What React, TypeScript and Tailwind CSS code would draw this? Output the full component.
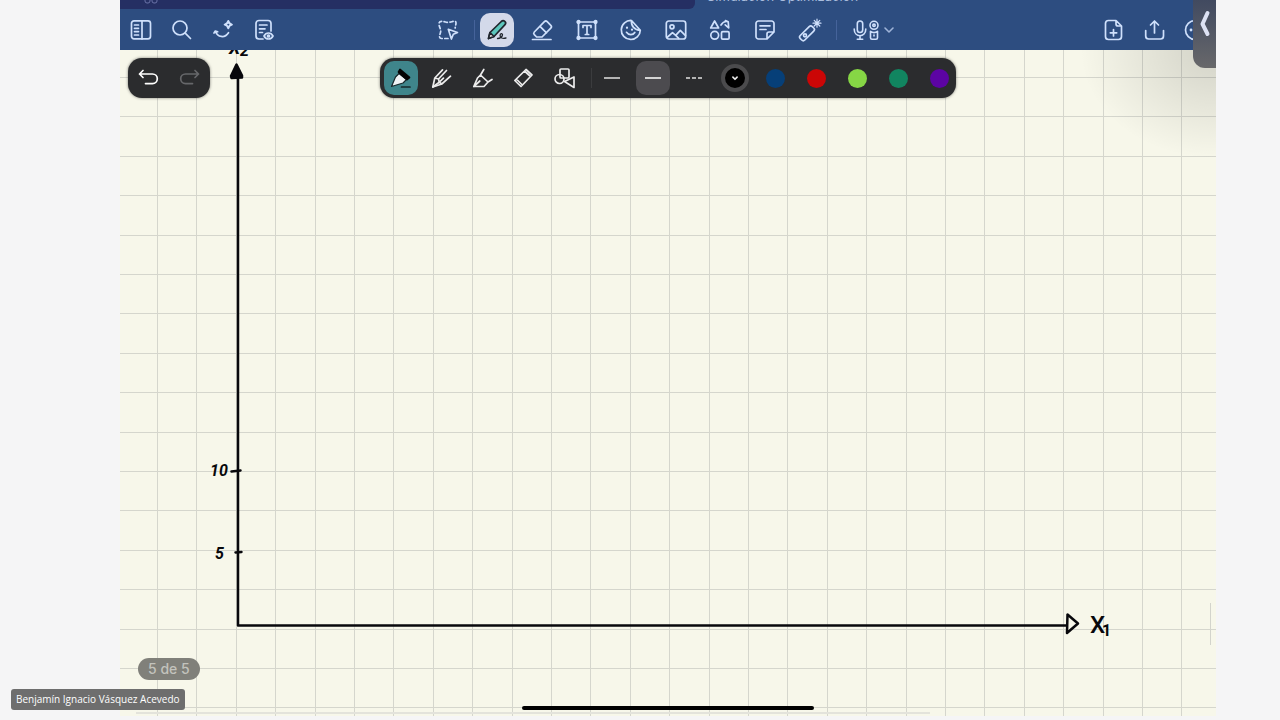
import type { ReactNode } from "react";

const GRID_STEP = 39.4;

const COLORS = [
  { name: "Azul", className: "bg-[#063f78]" },
  { name: "Rojo", className: "bg-[#cb0606]" },
  { name: "Lima", className: "bg-[#86d645]" },
  { name: "Verde", className: "bg-[#118560]" },
  { name: "Morado", className: "bg-[#5c04a3]" },
];

function Icon({ children, className = "size-6" }: { children: ReactNode; className?: string }) {
  return (
    <svg
      viewBox="0 0 24 24"
      className={`${className} shrink-0`}
      fill="none"
      stroke="currentColor"
      strokeWidth="1.7"
      strokeLinecap="round"
      strokeLinejoin="round"
      aria-hidden="true"
    >
      {children}
    </svg>
  );
}

function BarButton({ label, children }: { label: string; children: ReactNode }) {
  return (
    <button type="button" aria-label={label} className="flex h-10 w-[41px] items-center justify-center">
      {children}
    </button>
  );
}

function ToolButton({ label, active, children }: { label: string; active?: boolean; children: ReactNode }) {
  return (
    <button type="button" aria-label={label} aria-pressed={!!active} className="flex h-10 items-center justify-center">
      <span
        className={`flex h-[34px] w-[34px] items-center justify-center rounded-[10px] ${active ? "bg-[#d3d9ea]" : ""}`}
      >
        {children}
      </span>
    </button>
  );
}

function TabStrip() {
  return (
    <div className="flex h-[9px] items-end overflow-hidden bg-[#2d4d80] text-[13px] leading-4">
      <div className="flex h-full w-[575px] items-end overflow-hidden rounded-br-md bg-[#252f63] pb-[5px] pl-6 text-[#6a73a8]">
        <svg viewBox="0 0 14 14" className="size-3.5 shrink-0" fill="none" stroke="currentColor" aria-hidden="true">
          <rect x="1" y="1" width="5" height="12" rx="2" />
          <rect x="8" y="1" width="5" height="12" rx="2" />
        </svg>
      </div>
      <div className="pb-[5px] pl-3 font-['Inter',sans-serif] text-[#a9bddd]">Simulación Optimización</div>
    </div>
  );
}

function MainToolbar() {
  return (
    <nav aria-label="Herramientas" className="flex h-[41px] items-center bg-[#2d4d80] text-[#cfe0fb]">
      <BarButton label="Miniaturas">
        <Icon>
          <rect x="2.5" y="2.8" width="19" height="18" rx="2.5" />
          <path d="M13 3v18M5.5 7h4M5.5 10.3h4M5.5 13.6h4M5.5 17h4" />
        </Icon>
      </BarButton>
      <BarButton label="Buscar">
        <Icon>
          <circle cx="10" cy="10" r="7" />
          <path d="M15.2 15.2 20.500 20.500" />
        </Icon>
      </BarButton>
      <BarButton label="Asistente">
        <Icon>
          <path d="M4.500 13.500c2 5.500 9 7.300 13 1.200M3 15l1.300-2 2.400.8" />
          <path
            d="M17.300 3c.5 2.200 1.200 3 3.600 3.600-2.400.6-3.100 1.400-3.600 3.600-.5-2.200-1.200-3-3.600-3.600 2.400-.6 3.100-1.400 3.600-3.600Z"
            strokeWidth="2"
          />
        </Icon>
      </BarButton>
      <BarButton label="Modo lectura">
        <Icon>
          <path d="M11 21H7a3 3 0 0 1-3-3V5.500a3 3 0 0 1 3-3h9a3 3 0 0 1 3 3V13M7.500 7H15M7.500 10.800H13M7.500 14.500h3" />
          <path d="M12 18c2-4 7-4 9 0-2 4-7 4-9 0Z" />
          <circle cx="16.500" cy="18" r="1" />
        </Icon>
      </BarButton>

      <div className="ml-[142px] flex items-center">
        <button type="button" aria-label="Lazo" className="flex h-10 w-11 items-center justify-center">
          <Icon>
            <path
              d="M12 20.500H5.500a2 2 0 0 1-2-2c0-2 1.200-3.200 1.200-5.500S3 8.500 3 6c0-4 4-2.500 8-1.700 4 .7 9-3.300 9 .7 0 2-.8 3-.8 5"
              strokeDasharray="3.200 2.600"
            />
            <path d="m12.300 11.300 9.200 3.200-4.200 1.800-1.900 4.700Z" />
          </Icon>
        </button>
        <span className="ml-1 h-5 w-px bg-[#45639a]" />
        <div className="grid w-[357px] grid-cols-8">
          <ToolButton label="Lápiz" active>
            <Icon>
              <g stroke="#20262e">
                <path d="m3.500 20.500 1.500-6L16.300 3.500c2.300-2 5.700.7 3.700 3.200L9 18.500Z" fill="#5cc7bd" />
                <path d="m3.500 20.500 1.500-6L9 18.500Z" fill="#e7dfe0" />
                <path d="M12.500 20.500c2.500 0 5-1.800 5-3.700 0-1.600-2.400-1.500-2.400.7 0 2.500 2.400 3.300 5.900 2.500" strokeWidth="1.300" />
              </g>
            </Icon>
          </ToolButton>
          <ToolButton label="Borrador">
            <Icon>
              <path d="M4.300 16.700a2 2 0 0 1 0-2.700L14.400 3.700a2 2 0 0 1 2.800 0l3.600 3.600a2 2 0 0 1 0 2.800L12 19H6.600ZM10 8.300l6.500 6.500M2.500 21.500h18.500" />
            </Icon>
          </ToolButton>
          <ToolButton label="Texto">
            <Icon>
              <path d="M5 4h14M5 20h14M3.500 5v14M20.500 5v14" />
              <g fill="currentColor">
                <circle cx="3.500" cy="4" r="1.300" />
                <circle cx="20.500" cy="4" r="1.300" />
                <circle cx="3.500" cy="20" r="1.300" />
                <circle cx="20.500" cy="20" r="1.300" />
              </g>
              <path d="M8 9.500v-2h8v2M12 7.500v9M10.300 16.500h3.400" />
            </Icon>
          </ToolButton>
          <ToolButton label="Pegatinas">
            <Icon>
              <path d="M12.500 2.500a9.500 9.500 0 1 0 8.800 9.700ZM12.500 2.500c-.5 5.500 3 9.700 8.800 9.700" />
              <path d="M7.500 14.300c2.300 3.300 6.500 3 8.300.2" />
              <path d="M8 9.500v.3M13 11.500v.2" strokeWidth="2.200" />
            </Icon>
          </ToolButton>
          <ToolButton label="Imagen">
            <Icon>
              <rect x="2.300" y="3" width="19.400" height="18" rx="2.500" />
              <circle cx="8" cy="8.800" r="2" />
              <path d="m3 19.500 5.500-4.800 3.200 2.700 4.600-5 5.200 5.300M11.700 17.400l3 3" />
            </Icon>
          </ToolButton>
          <ToolButton label="Elementos">
            <Icon>
              <path d="m6.600 3 4 7H2.700ZM13 7c1.800-3 4.500-4 7.200-3.200l.5 6-3.500-3M20.200 3.800l-2.800-1.200" />
              <circle cx="6.700" cy="17.300" r="3.900" />
              <rect x="13.500" y="13.600" width="7.600" height="7.600" rx="1.300" />
            </Icon>
          </ToolButton>
          <ToolButton label="Nota">
            <Icon>
              <path d="M14 21H5.500A2.500 2.500 0 0 1 3 18.500v-13A2.500 2.500 0 0 1 5.500 3h13A2.500 2.500 0 0 1 21 5.500V14l-7 7Zm0 0v-5a2 2 0 0 1 2-2h5M7 7.800h10M7 11.500h6" />
            </Icon>
          </ToolButton>
          <ToolButton label="Puntero láser">
            <Icon>
              <rect x="0.500" y="12.100" width="17" height="6.400" rx="2.200" transform="rotate(-45 9 15.300)" />
              <circle cx="7" cy="17.300" r="1.500" />
              <path d="M19 1.200v8M15 5.200h8M16.200 2.400l5.600 5.600M21.800 2.400 16.200 8" strokeWidth="1.200" />
            </Icon>
          </ToolButton>
        </div>
        <span className="ml-1 h-5 w-px bg-[#45639a]" />
        <button type="button" aria-label="Grabar audio" className="ml-4 flex h-10 items-center">
          <svg
            viewBox="0 0 42 24"
            className="h-6 w-[42px]"
            fill="none"
            stroke="currentColor"
            strokeWidth="1.600"
            strokeLinecap="round"
            strokeLinejoin="round"
            aria-hidden="true"
          >
            <rect x="4.300" y="3" width="5.400" height="11.500" rx="2.700" />
            <path d="M1.200 11c0 9 11.600 9 11.600 0M7 17.800v3.500M4.300 21.300h5.400" />
            <circle cx="21" cy="7.300" r="4" />
            <circle cx="21" cy="7.300" r="1.200" />
            <path d="M17.500 13.300c2 1.500 5 1.500 7 0v6.500a1.500 1.500 0 0 1-1.500 1.500h-4a1.500 1.500 0 0 1-1.500-1.500ZM21 17v1" />
            <path d="m32 10 4 4 4-4" stroke="#9fb4d8" />
          </svg>
        </button>
      </div>

      <div className="ml-auto flex">
        <BarButton label="Añadir página">
          <Icon>
            <path d="M14 2.500H6.500a3 3 0 0 0-3 3v13a3 3 0 0 0 3 3h10a3 3 0 0 0 3-3V8ZM14 2.500V6a2 2 0 0 0 2 2h3.500M11.500 11.500v6.500M8.300 14.800h6.400" />
          </Icon>
        </BarButton>
        <BarButton label="Compartir">
          <Icon>
            <path d="M11.500 15V3M7.500 7l4-4 4 4M2.700 12.500v5.500a3 3 0 0 0 3 3h11.800a3 3 0 0 0 3-3v-5.500" />
          </Icon>
        </BarButton>
        <BarButton label="Más opciones">
          <Icon>
            <circle cx="11" cy="12" r="9.500" />
            <path d="M7 12h.01M11.500 12h.01M16 12h.01" strokeWidth="2.800" />
          </Icon>
        </BarButton>
      </div>
    </nav>
  );
}

function PenToolbar() {
  const cell = "flex h-10 items-center justify-center";
  return (
    <div
      role="toolbar"
      aria-label="Opciones del lápiz"
      className="absolute top-2 left-[260px] flex items-center rounded-[14px] bg-[#2b2c2e] text-[#ececec] shadow-[0_0_3px_rgba(0,0,0,0.5)]"
    >
      <div className="grid w-[205px] grid-cols-5">
        <button type="button" aria-label="Pluma estilográfica" aria-pressed="true" className={cell}>
          <span className="flex size-[34px] items-center justify-center rounded-[10px] bg-[#3f858b]">
            <Icon>
              <path d="m2.500 20.500 4-9.500 3.500-3.500 7.500 6-3.500 3.500Z" fill="#f1f3f5" stroke="#17282b" strokeWidth="1.200" />
              <path d="m9.500 6 1.500-2.500 9.500 8-2.500 2Z" fill="#050505" stroke="#050505" />
              <path d="M12.500 21h8.500" stroke="#17282b" />
            </Icon>
          </span>
        </button>
        <button type="button" aria-label="Bolígrafo" className={cell}>
          <Icon>
            <path d="M12.500 3.800 4.800 12 2.800 21l9-3 8.700-7.800M4.800 12l3.700 1 .8 3.200 2.500 1.800M8.500 13l8-8.500" />
            <path d="m2.800 21 6.500-4.800 4.200-4" />
          </Icon>
        </button>
        <button type="button" aria-label="Pincel" className={cell}>
          <Icon>
            <path d="M2.800 20.500 6.500 12l3-3 7.500 7-4 4.500ZM2.800 20.500l6-5.500M12.800 3.500 9.500 9M17 16l4-2.500" />
          </Icon>
        </button>
        <button type="button" aria-label="Resaltador" className={cell}>
          <Icon>
            <path d="m2.800 14.500 11.200-11 6 5.500L9 20.500ZM12.500 5l6 5.500M4.300 13l6 6" />
          </Icon>
        </button>
        <button type="button" aria-label="Formas" className={cell}>
          <Icon>
            <rect x="7" y="3" width="9" height="9" rx="1" />
            <circle cx="6.500" cy="13" r="4.500" />
            <path d="m11.500 15.500 9.500-4.500v10.500Z" />
          </Icon>
        </button>
      </div>
      <span className="ml-1.5 h-5 w-px bg-[#3b3c3e]" />
      <div className="-mr-1 grid w-[368px] grid-cols-9">
        <button type="button" aria-label="Trazo fino" className={cell}>
          <span className="h-0.5 w-4 bg-[#b4b4b4]" />
        </button>
        <button type="button" aria-label="Trazo medio" aria-pressed="true" className={cell}>
          <span className="flex size-[34px] items-center justify-center rounded-[10px] bg-[#4c4b4f]">
            <span className="h-0.5 w-4 bg-[#d4d4d4]" />
          </span>
        </button>
        <button type="button" aria-label="Trazo discontinuo" className={cell}>
          <span className="flex gap-0.5">
            <span className="h-0.5 w-1 bg-[#b4b4b4]" />
            <span className="h-0.5 w-1 bg-[#b4b4b4]" />
            <span className="h-0.5 w-1 bg-[#b4b4b4]" />
          </span>
        </button>
        <button type="button" aria-label="Negro" aria-pressed="true" className={cell}>
          <span className="flex size-7 items-center justify-center rounded-full border-4 border-[#4b4b4d] bg-black">
            <Icon className="size-2.5">
              <path d="m7 10 5 5 5-5" strokeWidth="4" />
            </Icon>
          </span>
        </button>
        {COLORS.map((color) => (
          <button key={color.name} type="button" aria-label={color.name} className={cell}>
            <span className={`size-[19px] rounded-full ${color.className}`} />
          </button>
        ))}
      </div>
    </div>
  );
}

function GraphSheet() {
  const columns = Array.from({ length: 64 }, (_, i) => Math.round(37 + i * GRID_STEP));
  const rows = Array.from({ length: 40 }, (_, i) => Math.round(27 + i * GRID_STEP));

  return (
    <svg className="absolute inset-0 size-full" role="img" aria-label="Ejes X1 y X2">
      <g fill="#d5d6cd">
        {columns.map((x) => (
          <rect key={x} x={x} y="0" width="1" height="100%" />
        ))}
        {rows.map((y) => (
          <rect key={y} x="0" y={y} width="100%" height="1" />
        ))}
      </g>
      <rect x="1090" y="553" width="1" height="42" fill="#d3d4cc" />

      {/* axes and ticks */}
      <g stroke="#08080c" strokeWidth="2.500" fill="none" strokeLinecap="round" strokeLinejoin="round">
        <path d="M118 26V575.500H947" />
        <path d="m116.500 14.500-5.500 11.500.5 2 10.500-.5v-2Z" fill="#08080c" />
        <path d="M947.500 564.500 947 583l11-9.500Z" fill="#f7f7ea" />
        <path d="m111.500 421.500 9-1M115.500 502.500l6-.5" />
      </g>

      <g fill="#08080c" className="font-['Roboto',sans-serif] font-bold italic">
        <text x="109" y="4" fontSize="18">X</text>
        <text x="120" y="6" fontSize="16">2</text>
        <text x="90" y="426" fontSize="16">10</text>
        <text x="95" y="509" fontSize="16">5</text>
      </g>
      <g fill="#08080c" className="font-['Roboto',sans-serif] font-medium">
        <text x="970" y="583" fontSize="24">X</text>
        <text x="982" y="586" fontSize="16" className="font-bold">1</text>
      </g>
    </svg>
  );
}

export default function App() {
  return (
    <div className="relative flex h-screen min-h-[480px] flex-col overflow-hidden bg-[#f5f5f6] pr-16 pb-1 pl-[120px] font-['Inter',sans-serif]">
      <div className="relative flex min-h-0 flex-1 flex-col overflow-hidden bg-[#f7f7ea]">
        <header>
          <TabStrip />
          <MainToolbar />
        </header>

        <main className="relative flex-1 overflow-hidden">
          <GraphSheet />
          <div className="absolute top-0 right-0 h-32 w-40 bg-radial-[at_100%_0%] from-black/15 to-transparent to-60%" />

          <div className="absolute top-2 left-2 flex rounded-[14px] bg-[#2b2c2e] text-white shadow-[0_0_3px_rgba(0,0,0,0.5)]">
            <BarButton label="Deshacer">
              <Icon>
                <path d="M6 4.500 2.500 8 6 11.500M2.500 8H15.500a4.800 4.800 0 0 1 0 9.600H8.500" />
              </Icon>
            </BarButton>
            <button
              type="button"
              aria-label="Rehacer"
              disabled
              className="flex h-10 w-[41px] items-center justify-center text-[#66676a]"
            >
              <Icon>
                <path d="M17 4.500 20.500 8 17 11.500M20.500 8H7.500a4.800 4.800 0 0 0 0 9.600h7" />
              </Icon>
            </button>
          </div>

          <PenToolbar />

          <div className="absolute bottom-9 left-[18px] rounded-full bg-[#80807a] px-2.5 text-sm leading-[22px] font-medium text-[#c3c3bd]">
            5 de 5
          </div>
          <div className="absolute bottom-1.5 left-1/2 h-1 w-[292px] -translate-x-1/2 rounded-full bg-black" />
          <div className="absolute bottom-0.5 left-4 h-0.5 w-[794px] bg-[#e3e3db]" />
        </main>

        <button
          type="button"
          aria-label="Mostrar panel"
          className="absolute top-0 right-0 flex h-[68px] w-[23px] justify-center rounded-bl-xl bg-linear-to-b from-[#414a60] to-[#68686a] pt-2.5"
        >
          <svg viewBox="0 0 12 28" className="h-7 w-3" fill="none" stroke="#dde2f3" strokeWidth="4" strokeLinecap="round" strokeLinejoin="round" aria-hidden="true">
            <path d="M8.500 3 3.500 14l5 10" />
          </svg>
        </button>
      </div>

      <div className="absolute bottom-2.5 left-[11px] rounded-[3px] bg-[#6e6e6e] px-[5px] font-['Open_Sans',sans-serif] text-[10px] leading-[21px] font-medium text-white">
        Benjamín Ignacio Vásquez Acevedo
      </div>
    </div>
  );
}
